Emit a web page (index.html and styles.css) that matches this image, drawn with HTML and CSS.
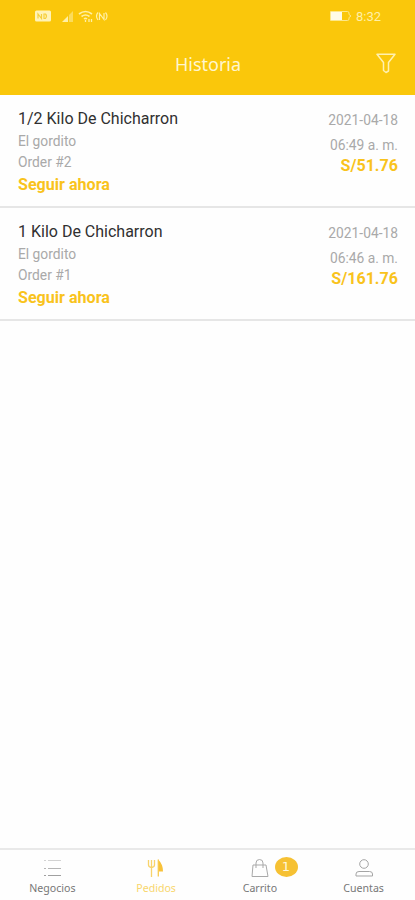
FILE: index.html
```html
<!DOCTYPE html>
<html lang="es">
<head>
    <meta charset="UTF-8">
    <meta name="viewport" content="width=device-width, initial-scale=1.0">
    <title>Historia</title>
    <link rel="stylesheet" href="styles.css">
</head>
<body>
    <div class="header">
        <div class="status-bar">
            <svg class="status-icons" width="76" height="14" viewBox="0 0 76 14">
                <rect x="1" y="1.500" width="16" height="11" rx="1.500" fill="#fff3b8"/>
                <path d="M4 9.500V5l3.500 4.500V5M10 5v4.500h1.500q2-2.500 0-4.500z" fill="none" stroke="#f5cf3c" stroke-width="1.200"/>
                <path d="M28 13l6-6v6z" fill="#fff0a6"/>
                <path d="M35 6l4-4v11h-4z" fill="#fbdc5c"/>
                <path d="M45 5q6.500-5 13 0M47.500 7.500q4-3 8 0M50 10q1.500-1.200 3 0" fill="none" stroke="#fff0a6" stroke-width="1.600"/>
                <path d="M51.500 13v-2M55 10v3M57.500 10v3" stroke="#fff0a6" stroke-width="1.300"/>
                <path d="M64 3.500q-3 3.500 0 7.500M71.500 3.500q3 3.500 0 7.500M65.500 11V4.500l4.500 6V4" fill="none" stroke="#fff0a6" stroke-width="1.200"/>
            </svg>
            <div class="status-right">
                <svg width="24" height="12" viewBox="0 0 24 12">
                    <rect x="1" y="2" width="12" height="8" fill="#fffbe6"/>
                    <path d="M1.500 1.500h17q1.500 0 1.500 1.500v1.500l2 1.500-2 1.500V9q0 1.500-1.500 1.500h-17z" fill="none" stroke="#fde88a" stroke-width="1"/>
                </svg>
                <span class="clock">8:32</span>
            </div>
        </div>
        <div class="title-bar">
            <h1>Historia</h1>
            <svg class="filter" width="20" height="21" viewBox="0 0 20 21">
                <path d="M1 1.300h18L12.500 9.500V18l-2.500 1.500-2.500-2V9.500z" fill="none" stroke="#fff1b0" stroke-width="1.500" stroke-linejoin="round"/>
            </svg>
        </div>
    </div>

    <div class="order-list">
        <div class="order">
            <div class="order-info">
                <h2>1/2 Kilo De Chicharron</h2>
                <p>El gordito</p>
                <p>Order #2</p>
                <a class="follow">Seguir ahora</a>
            </div>
            <div class="order-meta">
                <p>2021-04-18</p>
                <p class="time">06:49 a. m.</p>
                <span class="price">S/51.76</span>
            </div>
        </div>
        <div class="order">
            <div class="order-info">
                <h2>1 Kilo De Chicharron</h2>
                <p>El gordito</p>
                <p>Order #1</p>
                <a class="follow">Seguir ahora</a>
            </div>
            <div class="order-meta">
                <p>2021-04-18</p>
                <p class="time">06:46 a. m.</p>
                <span class="price">S/161.76</span>
            </div>
        </div>
    </div>

    <div class="tab-bar">
        <div class="tab">
            <svg width="20" height="20" viewBox="0 0 20 20" fill="none" stroke="#b5b5b5" stroke-width="1">
                <path d="M2 2.500h2M6 2.500h13" stroke="#d2d2d2"/>
                <path d="M2 10.500h2M6 10.500h13"/>
                <path d="M2 17.500h2M6 17.500h13" stroke="#a0a0a0"/>
            </svg>
            <span>Negocios</span>
        </div>
        <div class="tab active">
            <svg width="20" height="20" viewBox="0 0 20 20">
                <path d="M2.500 2v5q0 2 3 2.500 3-.5 3-2.500V2M5.500 2v17" fill="none" stroke="#f8d36b" stroke-width="1.300"/>
                <path d="M12 1.500q5 4.500 5 12h-4.500z" fill="#f8c23a"/>
                <path d="M12.300 1.500v17" stroke="#f8cb50" stroke-width="1.300"/>
            </svg>
            <span>Pedidos</span>
        </div>
        <div class="tab">
            <svg width="20" height="20" viewBox="0 0 20 20" fill="none" stroke="#a9a9a9" stroke-width="1">
                <path d="M3 7h13l2 11.500h-16z"/>
                <path d="M6 10V5q0-3.500 3.500-3.500T13 5v5"/>
            </svg>
            <span>Carrito</span>
            <div class="badge">1</div>
        </div>
        <div class="tab">
            <svg width="20" height="20" viewBox="0 0 20 20" fill="none" stroke="#a5a5a5" stroke-width="1">
                <circle cx="10" cy="6" r="4.300"/>
                <path d="M2 18v-2q0-2.500 3-2.500h10.500q3 0 3 2.500v2z"/>
            </svg>
            <span>Cuentas</span>
        </div>
    </div>
</body>
</html>
```

FILE: styles.css
```css
body {
    display: flex;
    flex-direction: column;
    height: 900px;
    margin: 0;
    font-family: Roboto, sans-serif;
    background-color: #fefefe;
}
h1, h2, p {
    margin: 0;
    font-weight: 400;
}
.header {
    height: 95px;
    background-color: #fac70b;
}
.status-bar {
    display: flex;
    justify-content: space-between;
    align-items: center;
    height: 32px;
    padding: 0 34px;
}
.status-right {
    display: flex;
    align-items: center;
    gap: 3px;
}
.clock {
    color: #fff0a6;
    font-size: 13px;
}
.title-bar {
    display: grid;
    grid-template-columns: 1fr auto 1fr;
    align-items: center;
    height: 63px;
    padding-right: 19px;
}
.title-bar h1 {
    grid-column: 2;
    padding-left: 20px;
    color: #fff6cf;
    font-family: "Noto Sans", sans-serif;
    font-size: 18px;
}
.filter {
    justify-self: end;
}
.order-list {
    flex: 1;
}
.order {
    display: flex;
    justify-content: space-between;
    box-sizing: border-box;
    height: 113px;
    padding: 13px 17px 0 18px;
    border-bottom: 2px solid #e6e6e6;
}
.order h2 {
    padding-bottom: 1px;
    color: #303030;
    font-size: 16px;
    line-height: 22px;
}
.order p {
    color: #a9a9a9;
    font-size: 13.8px;
    line-height: 21px;
}
.follow, .price {
    display: block;
    color: #f9c31c;
    font-size: 16.100px;
    font-weight: 700;
    line-height: 24px;
}
.order-meta {
    padding-top: 2px;
    text-align: right;
}
.order-meta .time {
    padding-top: 4px;
}
.order-meta .price {
    line-height: 20px;
}
.tab-bar {
    display: flex;
    box-sizing: border-box;
    height: 52px;
    border-top: 2px solid #e9e9e9;
}
.tab {
    position: relative;
    display: flex;
    flex: 1;
    flex-direction: column;
    align-items: center;
    padding: 8px 0 0 1px;
    color: #777777;
    font-family: "Noto Sans", sans-serif;
    font-size: 10.6px;
    line-height: 21px;
}
.tab.active {
    color: #f8d66c;
}
.badge {
    position: absolute;
    top: 7px;
    left: 67px;
    width: 23px;
    height: 20px;
    border-radius: 50%;
    background-color: #f6c133;
    color: #fff8dc;
    font-family: "DejaVu Sans", sans-serif;
    font-size: 13px;
    line-height: 20px;
    text-align: center;
}
```
